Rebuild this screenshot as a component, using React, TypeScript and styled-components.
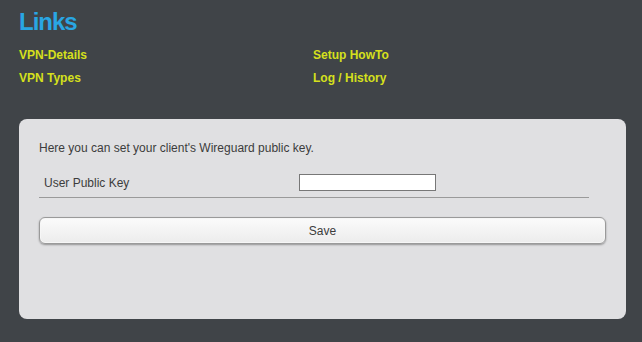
import styled, { createGlobalStyle } from "styled-components";

const GlobalStyle = createGlobalStyle`
  html, body {
    margin: 0;
    padding: 0;
    background-color: #404448;
    font-family: "Liberation Sans", Arial, sans-serif;
  }
`;

const Page = styled.div`
  width: 642px;
  height: 342px;
  box-sizing: border-box;
  padding: 8px 16px 0 19px;
  overflow: hidden;
`;

const Title = styled.h1`
  margin: 0;
  font-size: 24px;
  line-height: 28px;
  font-weight: bold;
  letter-spacing: -1px;
  color: #29a6e3;
`;

const LinkGrid = styled.div`
  display: grid;
  grid-template-columns: 294px 1fr;
  row-gap: 8px;
  margin-top: 12px;
`;

const NavLink = styled.a`
  font-size: 12px;
  line-height: 15px;
  font-weight: bold;
  color: #d6e01c;
  text-decoration: none;
  cursor: pointer;
`;

const Card = styled.div`
  margin-top: 33px;
  width: 607px;
  height: 200px;
  box-sizing: border-box;
  background-color: #e0e0e2;
  border-radius: 8px;
  padding: 22px 20px 0 20px;
`;

const Intro = styled.p`
  margin: 0;
  font-size: 12px;
  line-height: 14px;
  color: #3c3c3c;
`;

const FormRow = styled.div`
  display: grid;
  grid-template-columns: 260px 1fr;
  align-items: center;
  width: 550px;
  height: 28px;
  margin-top: 15px;
  border-bottom: 1px solid #9a9a9a;
  box-sizing: border-box;
  padding-bottom: 2px;
`;

const Label = styled.label`
  padding-left: 5px;
  font-size: 12px;
  color: #3c3c3c;
`;

const KeyInput = styled.input`
  width: 137px;
  height: 17px;
  box-sizing: border-box;
  border: 1px solid #777;
  background: #fff;
  padding: 0 2px;
  margin: 0;
  font-size: 12px;
  outline: none;
`;

const SaveButton = styled.button`
  display: block;
  width: 567px;
  height: 27px;
  margin-top: 19px;
  border: 1px solid #9a9a9a;
  border-radius: 6px;
  background: linear-gradient(#fbfbfb, #ececec);
  box-shadow: 0 1px 2px rgba(0, 0, 0, 0.35), inset 0 0 0 1px #f6f6f6;
  font-family: "Liberation Sans", Arial, sans-serif;
  font-size: 12px;
  color: #3c3c3c;
  cursor: pointer;
`;

export default function App() {
  return (
    <Page>
      <GlobalStyle />
      <Title>Links</Title>
      <LinkGrid>
        <NavLink>VPN-Details</NavLink>
        <NavLink>Setup HowTo</NavLink>
        <NavLink>VPN Types</NavLink>
        <NavLink>Log / History</NavLink>
      </LinkGrid>
      <Card>
        <Intro>Here you can set your client's Wireguard public key.</Intro>
        <FormRow>
          <Label>User Public Key</Label>
          <KeyInput type="text" />
        </FormRow>
        <SaveButton>Save</SaveButton>
      </Card>
    </Page>
  );
}
